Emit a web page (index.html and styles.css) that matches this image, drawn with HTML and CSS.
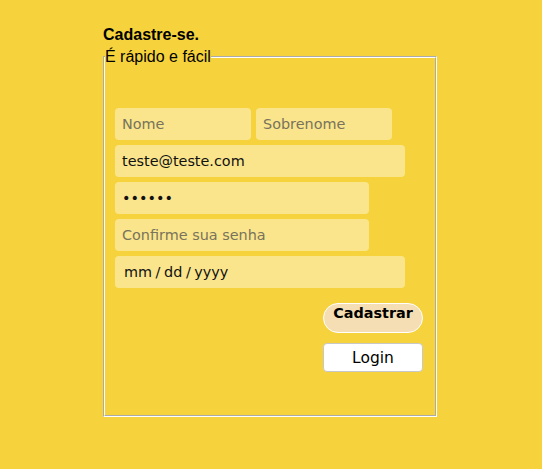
FILE: index.html
```html
<!DOCTYPE html>
<html lang="pt-BR">
<head>
<meta charset="utf-8">
<title>Cadastre-se</title>
<link rel="stylesheet" href="styles.css">
</head>
<body>
<main class="page">
  <h1 class="title">Cadastre-se.</h1>
  <fieldset class="box">
    <legend class="subtitle">É rápido e fácil</legend>
    <form class="form">
      <div class="row">
        <input class="field field-half" type="text" placeholder="Nome">
        <input class="field field-half" type="text" placeholder="Sobrenome">
      </div>
      <input class="field field-wide" type="email" value="teste@teste.com">
      <input class="field field-mid" type="password" value="123456">
      <input class="field field-mid" type="password" placeholder="Confirme sua senha">
      <input class="field field-wide field-date" type="text" value="mm / dd / yyyy">
      <div class="actions">
        <button class="btn btn-primary" type="submit">Cadastrar</button>
        <button class="btn btn-login" type="button">Login</button>
      </div>
    </form>
  </fieldset>
</main>
</body>
</html>
```
FILE: styles.css
```css
html, body {
  margin: 0;
  padding: 0;
}
body {
  background: #f6d33c;
  font-family: "Liberation Sans", Arial, sans-serif;
  font-size: 16px;
  color: #000;
  min-height: 469px;
}
.page {
  width: 334px;
  margin-left: calc(50% - 168px);
  padding-top: 26px;
}
.title {
  margin: 0;
  font-size: 16px;
  font-weight: bold;
  line-height: normal;
}
.box {
  margin: 4px 0 0;
  padding: 0;
  height: 369px;
  box-sizing: border-box;
  border: 2px groove #fff;
}
.subtitle {
  padding: 0;
  font-size: 16px;
  line-height: normal;
}
.form {
  display: flex;
  flex-direction: column;
  gap: 5px;
  padding: 42px 12px 0 10px;
}
.row {
  display: flex;
  gap: 5px;
}
.field {
  display: block;
  box-sizing: border-box;
  height: 32px;
  margin: 0;
  padding: 0 7px;
  border: none;
  border-radius: 4px;
  background: rgba(255, 255, 255, 0.42);
  font-family: "DejaVu Sans", sans-serif;
  font-size: 14.4px;
  color: #111;
  outline: none;
}
.field::placeholder {
  color: #78735a;
}
.field-half { width: 136px; }
.field-wide { width: 290px; }
.field-mid { width: 254px; }
.field-date { padding-left: 9px; word-spacing: -1px; }
.actions {
  display: flex;
  flex-direction: column;
  align-items: flex-end;
  gap: 10px;
  margin-top: 10px;
}
.btn {
  display: block;
  box-sizing: border-box;
  width: 100px;
  margin: 0;
  font-family: "DejaVu Sans", sans-serif;
  cursor: pointer;
}
.btn-primary {
  height: 30px;
  padding: 1px 0 10px;
  line-height: 17px;
  background: #f5deb3;
  border: 1px solid #fff;
  border-radius: 15px;
  font-size: 14.4px;
  font-weight: bold;
  color: #000;
}
.btn-login {
  height: 29px;
  padding: 0;
  background: #fff;
  border: 1px solid #c8c8c8;
  border-radius: 4px;
  font-size: 15.5px;
  color: #000;
}
```
